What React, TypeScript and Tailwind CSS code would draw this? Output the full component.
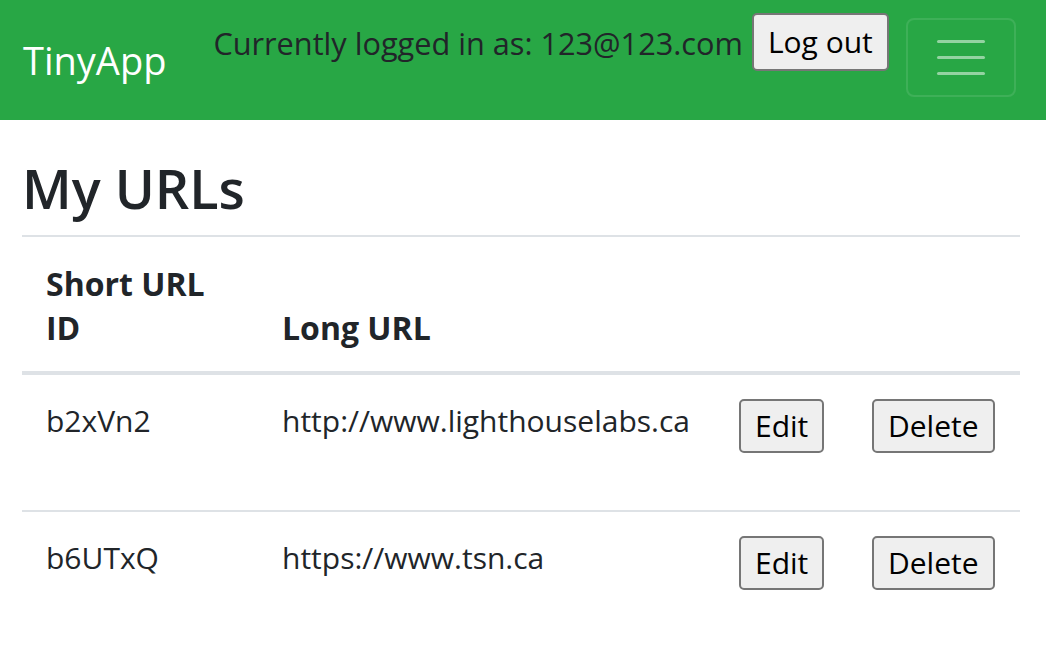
const rows = [
  { id: "b2xVn2", long: "http://www.lighthouselabs.ca" },
  { id: "b6UTxQ", long: "https://www.tsn.ca" },
];

const font = { fontFamily: '"Open Sans", "Noto Sans", sans-serif' };

const Btn = ({ children }: { children: React.ReactNode }) => (
  <button className="h-[54px] px-[14px] bg-[#efefef] border-2 border-[#767676] rounded-[5px] text-[30px] leading-none text-black">
    {children}
  </button>
);

const App = () => {
  return (
    <div className="w-[1046px] h-[666px] bg-white text-[#212529] overflow-hidden" style={font}>
      <nav className="h-[120px] bg-[#28a745] flex items-start pl-[23px] pr-[30px]">
        <a className="mt-[30px] text-[38px] leading-[60px] text-white">TinyApp</a>
        <span className="ml-[47px] mt-[21px] text-[30.7px] leading-[44px] text-[#212529] whitespace-nowrap">
          Currently logged in as: 123@123.com
        </span>
        <button className="ml-[9px] mt-[13px] h-[58px] px-[14px] bg-[#efefef] border-2 border-[#767676] rounded-[5px] text-[30px] leading-none text-black whitespace-nowrap">
          Log out
        </button>
        <button className="ml-auto mt-[18px] w-[110px] h-[79px] border-2 border-white/10 rounded-[8px] flex flex-col items-center justify-center gap-[13px]">
          <span className="block w-[48px] h-[3px] rounded-full bg-white/50" />
          <span className="block w-[48px] h-[3px] rounded-full bg-white/50" />
          <span className="block w-[48px] h-[3px] rounded-full bg-white/50" />
        </button>
      </nav>

      <main className="pl-[22px] pr-[26px]">
        <h1 className="pt-[28px] text-[54px] leading-[80px] font-semibold">My URLs</h1>
        <hr className="mt-[7px] border-0 h-[2px] bg-[#dee2e6]" />

        <div className="grid grid-cols-[236px_457px_134px_171px] h-[138px] border-b-4 border-[#dee2e6] font-bold text-[32px] leading-[44px] pb-[21px] items-end">
          <div className="px-[24px]">
            Short URL
            <br />
            ID
          </div>
          <div className="px-[24px]">Long URL</div>
          <div />
          <div />
        </div>

        {rows.map((r, i) => (
          <div
            key={r.id}
            className={`grid grid-cols-[236px_457px_134px_171px] h-[137px] pt-[24px] text-[30px] leading-[44px] items-start ${
              i === 0 ? "border-b-2 border-[#dee2e6]" : ""
            }`}
          >
            <div className="px-[24px]">{r.id}</div>
            <div className="px-[24px]">{r.long}</div>
            <div className="px-[24px]">
              <Btn>Edit</Btn>
            </div>
            <div className="px-[23px]">
              <Btn>Delete</Btn>
            </div>
          </div>
        ))}
      </main>
    </div>
  );
};

export default App;
